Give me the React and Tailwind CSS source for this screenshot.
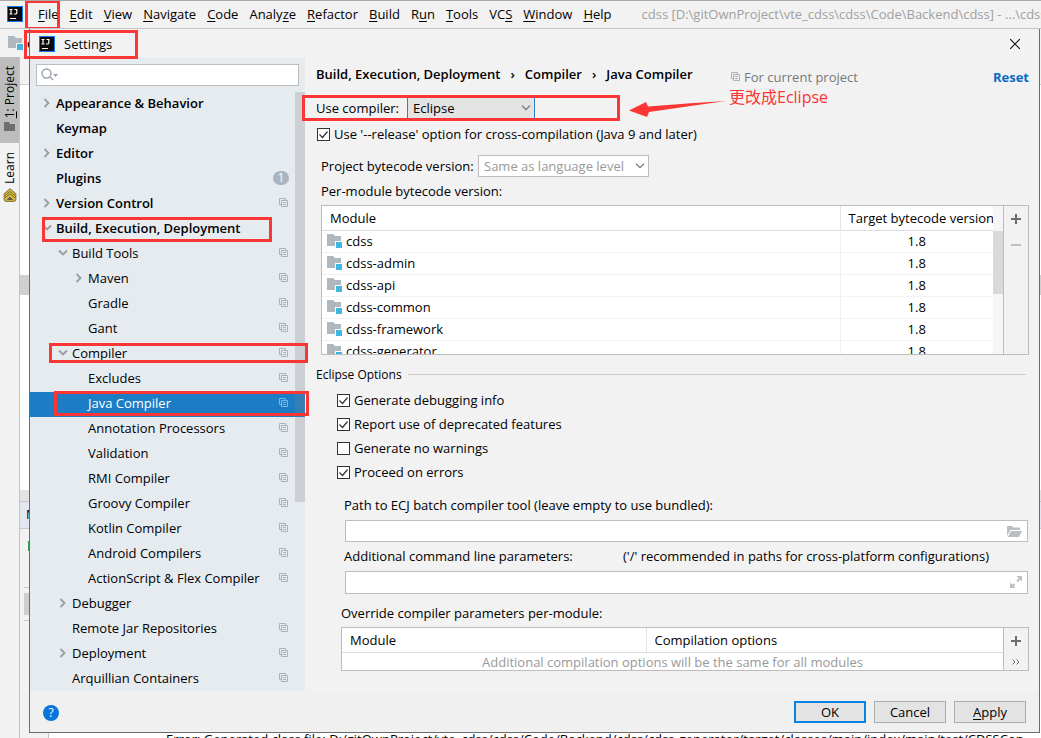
import { useState } from "react";

const MENU = [
  ["", "F", "ile"],
  ["", "E", "dit"],
  ["", "V", "iew"],
  ["", "N", "avigate"],
  ["", "C", "ode"],
  ["Analy", "z", "e"],
  ["", "R", "efactor"],
  ["", "B", "uild"],
  ["R", "u", "n"],
  ["", "T", "ools"],
  ["VC", "S", ""],
  ["", "W", "indow"],
  ["", "H", "elp"],
];

const TREE = [
  { label: "Appearance & Behavior", level: 0, arrow: "right" },
  { label: "Keymap", level: 0 },
  { label: "Editor", level: 0, arrow: "right" },
  { label: "Plugins", level: 0, badge: 1 },
  { label: "Version Control", level: 0, arrow: "right", project: true },
  {
    label: "Build, Execution, Deployment",
    level: 0,
    arrow: "down",
    mark: "left-3 right-[33px] top-0 bottom-0",
  },
  { label: "Build Tools", level: 1, arrow: "down", project: true },
  { label: "Maven", level: 2, arrow: "right", project: true },
  { label: "Gradle", level: 2, project: true },
  { label: "Gant", level: 2, project: true },
  {
    label: "Compiler",
    level: 1,
    arrow: "down",
    project: true,
    mark: "left-[19px] -right-[3px] top-px bottom-1",
  },
  { label: "Excludes", level: 2, project: true },
  {
    label: "Java Compiler",
    level: 2,
    project: true,
    mark: "left-6 -right-1 -top-px bottom-px",
  },
  { label: "Annotation Processors", level: 2, project: true },
  { label: "Validation", level: 2, project: true },
  { label: "RMI Compiler", level: 2, project: true },
  { label: "Groovy Compiler", level: 2, project: true },
  { label: "Kotlin Compiler", level: 2, project: true },
  { label: "Android Compilers", level: 2, project: true },
  { label: "ActionScript & Flex Compiler", level: 2, project: true },
  { label: "Debugger", level: 1, arrow: "right" },
  { label: "Remote Jar Repositories", level: 1, project: true },
  { label: "Deployment", level: 1, arrow: "right", project: true },
  { label: "Arquillian Containers", level: 1, project: true },
];

const INDENT = ["pl-3", "pl-7", "pl-11"];

const MODULES = [
  "cdss",
  "cdss-admin",
  "cdss-api",
  "cdss-common",
  "cdss-framework",
  "cdss-generator",
];

const Mark = ({ className }) => (
  <span
    className={`absolute z-20 border-3 border-[#fc3535] pointer-events-none ${className}`}
  />
);

const IdeaLogo = () => (
  <svg width="16" height="16" viewBox="0 0 16 16" className="shrink-0">
    <rect width="16" height="16" fill="#087cfa" />
    <rect x="1" y="1" width="14" height="14" fill="#0b0b0b" />
    <path
      d="M2.500 3.500h3M4 3.500v4.500M2.500 8h3M7.500 3.500h3M9.800 3.500v3.200q0 1.300-1.300 1.300H7M3 12.500h6"
      stroke="#fff"
      strokeWidth="1.2"
      fill="none"
    />
  </svg>
);

const ModuleIcon = () => (
  <svg width="16" height="15" viewBox="0 0 16 15" className="shrink-0">
    <path d="M0 0h6l2 2h6v5H8v5H0z" fill="#afb8be" />
    <rect x="9" y="8" width="6" height="6" fill="#40b6e0" />
  </svg>
);

const ProjectIcon = ({ color = "#a9b3ba" }) => (
  <svg
    width="10"
    height="10"
    viewBox="0 0 10 10"
    fill="none"
    stroke={color}
    className="shrink-0"
  >
    <path d="M2.5 6.5h-2v-6h6v2M2.5 2.5h6v6h-6zM4 4.5h3M4 6.5h3" />
  </svg>
);

const TreeArrow = ({ direction }) => (
  <svg
    width="10"
    height="10"
    viewBox="0 0 10 10"
    fill="none"
    stroke="#9a9da0"
    strokeWidth="1.8"
    className="shrink-0"
  >
    {direction === "right" && <path d="M2.5 1l4 4-4 4" />}
    {direction === "down" && <path d="M1 2.5l4 4 4-4" />}
  </svg>
);

const Chevron = () => (
  <svg
    width="10"
    height="6"
    viewBox="0 0 10 6"
    fill="none"
    stroke="#6e6e6e"
    className="absolute right-1 top-2 pointer-events-none"
  >
    <path d="M1 .7l4 4 4-4" strokeWidth="1.2" />
  </svg>
);

const Plus = () => (
  <svg width="10" height="10" viewBox="0 0 10 10">
    <path d="M5 0v10M0 5h10" stroke="#6e6e6e" strokeWidth="2" />
  </svg>
);

const Check = ({ label, initial }) => {
  const [checked, setChecked] = useState(initial);
  return (
    <label className="flex items-center gap-1 h-6">
      <span className="relative w-[13px] h-[13px] shrink-0">
        <input
          type="checkbox"
          checked={checked}
          onChange={(e) => setChecked(e.target.checked)}
          className="block appearance-none w-full h-full bg-white border border-[#333]"
        />
        {checked && (
          <svg
            viewBox="0 0 13 13"
            className="absolute inset-0 pointer-events-none"
            fill="none"
            stroke="#333"
            strokeWidth="1.2"
          >
            <path d="M2.5 6.5l3 3 5-6" />
          </svg>
        )}
      </span>
      {label}
    </label>
  );
};

const TreeRow = ({ item, selected, onSelect }) => (
  <li className="relative">
    <button
      onClick={onSelect}
      className={`flex items-center w-full h-[25px] pr-4 pb-[3px] text-left whitespace-nowrap ${INDENT[item.level]} ${
        item.level === 0 ? "font-semibold" : ""
      } ${selected ? "bg-[#1d7dc4] text-white" : ""}`}
    >
      <TreeArrow direction={item.arrow} />
      <span className="ml-1 flex-1">{item.label}</span>
      {item.badge && (
        <span className="w-4 h-[14px] rounded-full bg-[#a9b5bf] text-white text-xs leading-[14px] font-normal text-center">
          {item.badge}
        </span>
      )}
      {item.project && <ProjectIcon color={selected ? "#7fb4dc" : "#a9b3ba"} />}
    </button>
    {item.mark && <Mark className={item.mark} />}
  </li>
);

const Ide = () => (
  <div className="flex flex-col h-full">
    {/* Menu bar */}
    <nav className="relative flex items-center h-[29px] shrink-0 pl-[7px] pb-px border-t border-[#a9a9a9] border-b border-b-[#c6c6c6] whitespace-nowrap overflow-hidden">
      <IdeaLogo />
      <Mark className="left-[25px] w-[35px] -top-px h-[30px]" />
      <div className="flex gap-[11px] ml-[15px]">
        {MENU.map(([before, key, after]) => (
          <button key={before + key + after}>
            {before}
            <span className="underline underline-offset-2">{key}</span>
            {after}
          </button>
        ))}
      </div>
      <span className="ml-[30px] text-[#a0a0a0]">
        cdss [D:\gitOwnProject\vte_cdss\cdss\Code\Backend\cdss] - ...\cdss-
      </span>
    </nav>

    {/* Navigation bar */}
    <div className="flex items-center gap-[3px] h-7 shrink-0 pl-2 font-semibold">
      <ModuleIcon />
      cdss
    </div>

    <div className="flex flex-1 min-h-0">
      {/* Tool window stripe */}
      <div className="flex flex-col w-5 shrink-0 border-r border-[#c4c4c4] text-xs">
        <button className="flex flex-col items-center gap-1 h-[86px] pt-[9px] bg-[#bdbdbd]">
          <span className="[writing-mode:vertical-rl] rotate-180 leading-4">
            <u>1</u>: Project
          </span>
          <svg width="11" height="9" viewBox="0 0 11 9">
            <path d="M0 0h5l1 2h5v7H0z" fill="#6e6e6e" />
          </svg>
        </button>
        <button className="flex flex-col items-center gap-1 pt-[9px]">
          <span className="[writing-mode:vertical-rl] rotate-180 leading-4">
            Learn
          </span>
          <svg width="14" height="14" viewBox="0 0 14 14">
            <path
              d="M7 .7l5.8 5v6.2l-1 1.4H2.200l-1-1.400V5.700z"
              fill="#e0c02c"
              stroke="#75664a"
            />
            <path
              d="M2 7.500l5-4 5 4M2 9.800l5-4 5 4"
              stroke="#75664a"
              fill="none"
            />
            <path d="M3.500 12L7 8.500l3.500 3.500z" fill="#5f5f5f" />
          </svg>
        </button>
      </div>

      <div className="flex flex-col flex-1 min-w-0">
        <div className="h-7 shrink-0 border-b border-[#d0d0d0]" />
        <div className="h-[190px] shrink-0 bg-white" />
        <div className="h-5 shrink-0 bg-[#d0d0d0]" />
        <div className="flex-1 bg-white" />
        <div className="h-[11px] shrink-0 bg-[#e3e3e3]" />
        <div className="h-7 shrink-0 pl-[6px] border-y border-[#c8c8c8] bg-[#e3e6ee] leading-6">
          Messages
        </div>
        <div className="flex h-[209px] shrink-0">
          <div className="flex flex-col w-[29px] shrink-0 pl-1 border-r border-[#c4c4c4]">
            <span className="w-3 h-[10px] mt-3 ml-1 bg-[#35a04a]" />
            <span className="mt-9 border-t border-[#c8c8c8]" />
            <span className="h-[22px] mt-[5px] bg-[#cfcfcf]" />
            <span className="mt-[5px] border-t border-[#c8c8c8]" />
          </div>
          <div className="flex flex-col justify-end flex-1 min-w-0 bg-white overflow-hidden">
            <p className="h-[7px] pl-[117px] whitespace-nowrap leading-4">
              Error: Generated class file: D:/gitOwnProject/vte_cdss/cdss/Code/Backend/cdss/cdss-generator/target/classes/main/index/main/test/CDSSCon
            </p>
          </div>
        </div>
      </div>
    </div>
  </div>
);

const Sidebar = ({ selected, onSelect }) => (
  <aside className="relative flex flex-col w-[275px] shrink-0 bg-[#e6ebf0]">
    <div className="relative m-[6px]">
      <input
        type="text"
        aria-label="Search settings"
        className="block w-full h-[22px] pl-7 bg-white border border-[#bdbdbd] outline-none"
      />
      <svg
        width="18"
        height="14"
        viewBox="0 0 18 14"
        fill="none"
        stroke="#9aa2a9"
        strokeWidth="1.4"
        className="absolute left-[5px] top-1 pointer-events-none"
      >
        <circle cx="5.500" cy="5.500" r="4.500" />
        <path d="M9 9l3 3" />
        <path d="M12 6h5l-2.500 3z" fill="#9aa2a9" stroke="none" />
      </svg>
    </div>
    <ul className="flex-1 min-h-0">
      {TREE.map((item) => (
        <TreeRow
          key={item.label}
          item={item}
          selected={selected === item.label}
          onSelect={() => onSelect(item.label)}
        />
      ))}
    </ul>
    <span className="absolute right-0 top-[34px] w-[10px] h-[410px] bg-[#7f7f7f]/25" />
  </aside>
);

const Content = () => (
  <main className="flex flex-col flex-1 min-w-0 pr-[10px]">
    {/* Breadcrumb */}
    <header className="flex items-start h-[37px] pl-[11px] pt-[7px] font-semibold whitespace-nowrap">
      <h1 className="flex gap-[10px]">
        Build, Execution, Deployment <span>›</span> Compiler <span>›</span> Java
        Compiler
      </h1>
      <span className="flex items-center gap-[3px] ml-auto mr-[135px] mt-[3px] font-normal text-[#787878]">
        <ProjectIcon />
        For current project
      </span>
      <button className="mt-[3px] font-bold text-[#0a6bc5]">Reset</button>
    </header>

    <div className="relative flex items-center h-[26px] pl-[11px]">
      <Mark className="-left-[3px] w-[318px] top-0 h-[26px]" />
      <label htmlFor="compiler" className="w-[91px]">
        Use compiler:
      </label>
      <div className="relative">
        <select
          id="compiler"
          defaultValue="Eclipse"
          className="block appearance-none w-32 h-[22px] pl-[5px] bg-[#e3e3e3] border border-[#2a85cf] outline-none"
        >
          <option>Javac</option>
          <option>Eclipse</option>
        </select>
        <Chevron />
      </div>
      <div className="absolute left-[324px] top-[-10px] flex items-start gap-[3px] text-[#fc3535] text-base leading-6">
        <svg width="97" height="36" viewBox="0 0 97 36">
          <path
            d="M0 25.500L17 17l2 4.500 46-3.500 32-2-32 4.500L20 27l-2 5z"
            fill="#fc3535"
          />
        </svg>
        <span>更改成Eclipse</span>
      </div>
    </div>

    <div className="pl-3 pt-px">
      <Check
        label="Use '--release' option for cross-compilation (Java 9 and later)"
        initial
      />
    </div>

    <div className="flex items-center h-[22px] mt-[9px] pl-4">
      <label htmlFor="bytecode" className="w-[157px]">
        Project bytecode version:
      </label>
      <div className="relative">
        <select
          id="bytecode"
          className="block appearance-none w-[171px] h-[22px] pl-[5px] bg-white border border-[#bdbdbd] text-[#999] outline-none"
        >
          <option>Same as language level</option>
        </select>
        <Chevron />
      </div>
    </div>
    <p className="mt-[5px] mb-[5px] pl-4">Per-module bytecode version:</p>

    {/* Modules */}
    <div className="flex h-[150px] shrink-0 ml-4 border border-[#bdbdbd]">
      <div className="flex-1 bg-white overflow-hidden">
        <table className="w-full table-fixed border-collapse whitespace-nowrap">
          <thead>
            <tr className="h-6 border-b border-[#dedede]">
              <th className="pl-2 text-left font-normal">Module</th>
              <th className="w-[153px] pl-2 border-l border-[#e3e3e3] text-left font-normal">
                Target bytecode version
              </th>
            </tr>
          </thead>
          <tbody>
            {MODULES.map((name) => (
              <tr key={name} className="h-[22px] border-b border-[#f2f2f2]">
                <td className="pl-[5px]">
                  <span className="flex items-center gap-[3px]">
                    <ModuleIcon />
                    {name}
                  </span>
                </td>
                <td className="border-l border-[#f2f2f2] text-center">1.8</td>
              </tr>
            ))}
          </tbody>
        </table>
      </div>
      <div className="w-[10px] pt-[25px] bg-[#f5f5f5]">
        <div className="h-[63px] bg-[#d9d9d9]" />
      </div>
      <div className="flex flex-col items-center w-[25px] border-l border-[#bdbdbd]">
        <button aria-label="Add module" className="h-[26px]">
          <Plus />
        </button>
        <button aria-label="Remove module" className="h-[26px]">
          <svg width="10" height="2" viewBox="0 0 10 2">
            <rect width="10" height="2" fill="#bfbfbf" />
          </svg>
        </button>
      </div>
    </div>

    <fieldset className="flex flex-col">
      <div className="flex items-center gap-[6px] h-[33px] pl-[11px] pr-[3px] pt-[6px] text-xs">
        <span>Eclipse Options</span>
        <hr className="flex-1 border-[#cbcbcb]" />
      </div>
      <div className="pl-8">
        <Check label="Generate debugging info" initial />
        <Check label="Report use of deprecated features" initial />
        <Check label="Generate no warnings" initial={false} />
        <Check label="Proceed on errors" initial />
      </div>
    </fieldset>

    <label htmlFor="ecj" className="mt-3 pl-[39px]">
      Path to ECJ batch compiler tool (leave empty to use bundled):
    </label>
    <div className="relative mt-[6px] ml-10 mr-px">
      <input
        id="ecj"
        type="text"
        className="block w-full h-[22px] px-1 bg-white border border-[#bdbdbd] outline-none"
      />
      <svg
        width="15"
        height="11"
        viewBox="0 0 15 11"
        fill="#b9c0c5"
        className="absolute right-[6px] top-[6px]"
      >
        <path d="M0 0h5l1.500 1.500H13V4H3.500L0 10z" />
        <path d="M4 5h11l-3 6H1z" />
      </svg>
    </div>

    <div className="flex mt-[5px] pl-[39px] whitespace-nowrap">
      <label htmlFor="params" className="w-[279px]">
        Additional command line parameters:
      </label>
      <span>('/' recommended in paths for cross-platform configurations)</span>
    </div>
    <div className="relative mt-[6px] ml-10 mr-px">
      <input
        id="params"
        type="text"
        className="block w-full h-[23px] px-1 bg-white border border-[#bdbdbd] outline-none"
      />
      <svg
        width="12"
        height="12"
        viewBox="0 0 12 12"
        fill="#b9c0c5"
        className="absolute right-[6px] top-[5px]"
      >
        <path d="M6.500 0H12v5.500L10.200 3.700 7.700 6.200l-1.400-1.400 2.500-2.500z" />
        <path d="M0 6.500V12h5.500L3.700 10.200l1.500-1.500-1.400-1.400-1.500 1.500z" />
      </svg>
    </div>

    <p className="mt-[10px] mb-[5px] pl-9">
      Override compiler parameters per-module:
    </p>
    <div className="flex h-11 shrink-0 ml-9 border border-[#bdbdbd]">
      <div className="flex-1 bg-white overflow-hidden">
        <table className="w-full table-fixed border-collapse">
          <thead>
            <tr className="h-6 border-b border-[#dedede] text-left">
              <th className="w-[46%] pl-2 font-normal">Module</th>
              <th className="pl-2 border-l border-[#e3e3e3] font-normal">
                Compilation options
              </th>
            </tr>
          </thead>
          <tbody>
            <tr>
              <td colSpan={2} className="text-center text-[#999]">
                Additional compilation options will be the same for all modules
              </td>
            </tr>
          </tbody>
        </table>
      </div>
      <div className="flex flex-col items-center w-[25px] border-l border-[#bdbdbd]">
        <button aria-label="Add override" className="h-[26px]">
          <Plus />
        </button>
        <button aria-label="More actions" className="h-4">
          <svg width="8" height="6" viewBox="0 0 8 6" fill="none" stroke="#6e6e6e">
            <path d="M.500 .500L3 3 .500 5.500M4.500 .500L7 3 4.500 5.500" />
          </svg>
        </button>
      </div>
    </div>
  </main>
);

const SettingsDialog = () => {
  const [selected, setSelected] = useState("Java Compiler");
  return (
    <div
      role="dialog"
      aria-label="Settings"
      className="absolute left-[29px] right-px top-[29px] bottom-[5px] flex flex-col bg-[#f2f2f2] border border-t-0 border-[#6b6b6b]"
    >
      <div className="relative flex items-center h-[29px] shrink-0 pl-[9px] pr-[19px] pt-px">
        <Mark className="-left-[6px] w-[114px] top-px h-[29px]" />
        <IdeaLogo />
        <span className="ml-[9px]">Settings</span>
        <button aria-label="Close" className="ml-auto">
          <svg width="10" height="10" viewBox="0 0 10 10">
            <path d="M0 0l10 10M10 0L0 10" stroke="#111" strokeWidth="1.2" />
          </svg>
        </button>
      </div>

      <div className="flex flex-1 min-h-0">
        <Sidebar selected={selected} onSelect={setSelected} />
        <Content />
      </div>

      <footer className="flex items-center gap-2 h-[41px] shrink-0 px-[13px] bg-[#f0f0f0]">
        <button
          aria-label="Help"
          className="w-4 h-4 mt-[2px] mr-auto rounded-full bg-[#0a74da] text-white text-xs leading-4"
        >
          ?
        </button>
        <button className="w-[72px] h-[22px] leading-4 bg-[#e3e3e3] border-2 border-[#0a84e0]">
          OK
        </button>
        <button className="w-[72px] h-[22px] leading-4 bg-[#e3e3e3] border border-[#adadad]">
          Cancel
        </button>
        <button className="w-[72px] h-[22px] leading-4 bg-[#e3e3e3] border border-[#adadad]">
          <u className="underline-offset-2">A</u>pply
        </button>
      </footer>
    </div>
  );
};

const App = () => (
  <div className="relative h-screen min-h-[738px] overflow-hidden bg-[#f2f2f2] text-black text-[13px] leading-[18px] font-['Open_Sans','Noto_Sans_CJK_SC',sans-serif]">
    <Ide />
    <SettingsDialog />
  </div>
);

export default App;
